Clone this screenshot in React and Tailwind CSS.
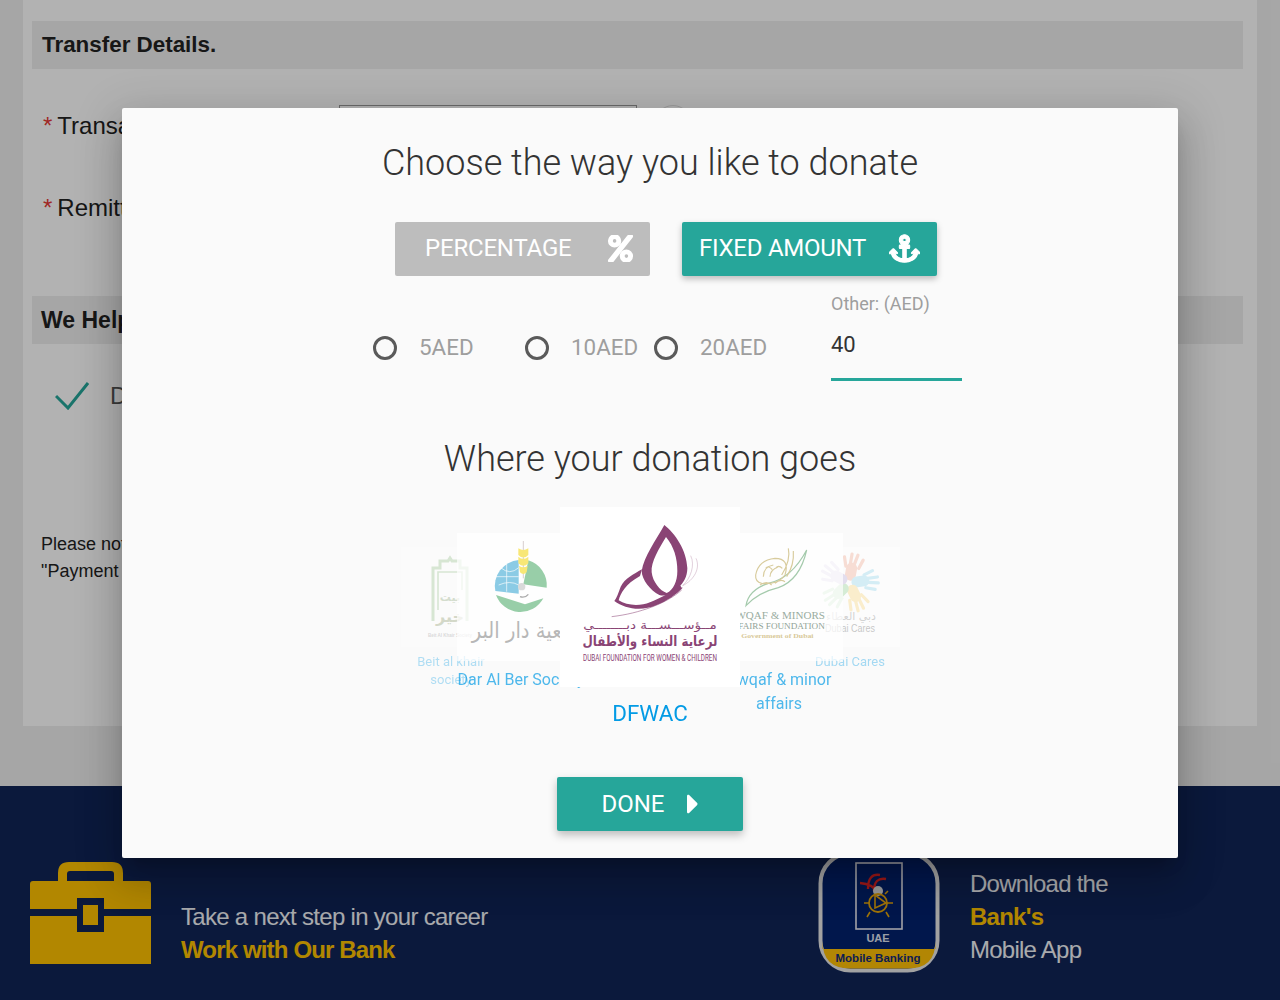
import React from "react";
import { FaPercent, FaAnchor, FaCaretRight } from "react-icons/fa";

const arabic = "'DejaVu Sans', sans-serif";

function Briefcase() {
  return (
    <svg width="121" height="102" viewBox="30 863 121 102" className="shrink-0">
      <path
        fillRule="evenodd"
        fill="#ffc200"
        d="M58 882V874Q58 863 69 863H112Q123 863 123 874V882H148Q151 882 151 885V910H104V899H77V910H30V885Q30 882 33 882ZM67 882H114V875Q114 872 111 872H70Q67 872 67 875Z"
      />
      <path fill="#ffc200" d="M30 917H77V933H104V917H151V965H30Z" />
      <rect x="83" y="906" width="15" height="20" fill="#ffc200" />
    </svg>
  );
}

function AppIcon() {
  return (
    <svg width="122" height="122" viewBox="0 0 122 122" className="shrink-0">
      <rect x="2.5" y="2.5" width="117" height="117" rx="30" fill="#02226e" stroke="#e8e8e8" strokeWidth="4" />
      <path d="M4.5 98H117.5V90Q117.5 117.5 90 117.5H32Q4.5 117.5 4.5 90Z" fill="#ffc107" />
      <rect x="38" y="12" width="46" height="66" fill="none" stroke="#e8e8ef" strokeWidth="1.6" />
      <path d="M42 32Q55 33 60 42M50 38Q50 22 62 24M56 40Q56 26 68 28" fill="none" stroke="#d22" strokeWidth="2.4" />
      <circle cx="60" cy="40" r="5" fill="#ddd" />
      <circle cx="60" cy="52" r="9" fill="none" stroke="#e5a50c" strokeWidth="1.8" />
      <path d="M57 44L68 52L57 57ZM46 52H51M69 52H75M52 61L49 66M68 61L71 66M67 43L70 40" fill="none" stroke="#e5a50c" strokeWidth="1.6" />
      <text x="60" y="91" textAnchor="middle" fontSize="11" fontWeight="700" fill="#dfe3ee" fontFamily="'Liberation Sans', sans-serif">UAE</text>
      <text x="60" y="111" textAnchor="middle" fontSize="11.5" fontWeight="700" fill="#122a78" fontFamily="'Liberation Sans', sans-serif">Mobile Banking</text>
    </svg>
  );
}

function DfwacLogo() {
  return (
    <svg width="180" height="180" viewBox="-30 -24 540 540" className="block">
      <g fill="#8a4475">
        <path
          fillRule="evenodd"
          d="M283 30C315 55 350 105 352 160C352 185 340 205 325 218C305 236 285 246 268 240C240 225 216 195 215 168C222 125 258 75 283 30ZM288 66C268 100 242 140 245 172C248 200 270 228 290 234C310 225 322 200 322 168C322 130 312 95 288 66Z"
        />
        <path
          fillRule="evenodd"
          d="M216 163C190 178 165 190 152 215C145 235 140 248 133 258C165 282 215 290 260 270C290 258 320 238 338 218L322 214C300 235 270 250 240 262C210 274 170 272 146 256C152 235 165 208 210 183Z"
        />
        <circle cx="327" cy="216" r="6" />
      </g>
      <path d="M338 212C362 190 376 150 362 122M338 212C372 195 392 160 378 130" fill="none" stroke="#b788a6" strokeWidth="1.2" />
      <path d="M125 305C210 295 290 265 335 225" fill="none" stroke="#8a4475" strokeWidth="1.6" />
      <g fontFamily={arabic} fill="#8a4475" textAnchor="middle">
        <text x="240" y="342" fontSize="34" textLength="400" lengthAdjust="spacingAndGlyphs" direction="rtl">مــؤســـســـة دبــــــــي</text>
        <text x="240" y="392" fontSize="42" fontWeight="700" textLength="405" lengthAdjust="spacingAndGlyphs" direction="rtl">لرعاية النساء والأطفال</text>
      </g>
      <text x="240" y="438" textAnchor="middle" fontSize="28" fill="#8a4475" fontFamily="'Roboto', sans-serif" textLength="402" lengthAdjust="spacingAndGlyphs">DUBAI FOUNDATION FOR WOMEN &amp; CHILDREN</text>
    </svg>
  );
}

function DarAlBerLogo() {
  return (
    <svg width="128" height="128" viewBox="-9 -6 384 384" className="block">
      <path d="M176 75A78 78 0 0 0 106 168L176 176Z" fill="#5bb7dc" />
      <path d="M205 76A78 78 0 0 1 260 158L190 148Z" fill="#6dbb84" />
      <path d="M108 180L195 208L250 190A78 78 0 0 1 108 180Z" fill="#6dbb84" />
      <path d="M140 85L140 170M108 125H176M122 98Q150 122 176 98M116 150Q150 135 176 150" fill="none" stroke="#fff" strokeWidth="2" />
      <path d="M190 18V130" stroke="#a99" strokeWidth="2" />
      <path d="M175 40Q190 50 205 40L205 60Q190 75 175 60ZM175 65Q190 78 205 65L205 85Q190 100 175 85ZM177 92Q190 102 203 92L200 112Q190 122 180 112Z" fill="#f6df3d" />
      <circle cx="185" cy="155" r="11" fill="#ccc" />
      <path d="M180 185Q195 190 205 178" fill="none" stroke="#888" strokeWidth="4" />
      <text x="205" y="310" textAnchor="middle" fontSize="66" fill="#9a9a9a" fontFamily={arabic} direction="rtl" textLength="340" lengthAdjust="spacingAndGlyphs">جمعية دار البر</text>
    </svg>
  );
}

function AwqafLogo() {
  return (
    <svg width="128" height="128" viewBox="-60 -6 384 384" className="block">
      <path d="M33 212Q40 165 100 145Q170 130 215 45Q195 135 130 158Q70 172 33 212Z" fill="none" stroke="#7fb58a" strokeWidth="3.5" />
      <path
        d="M62 120Q70 75 120 70Q165 70 150 120Q130 150 80 145Q60 140 62 120ZM85 125Q85 95 115 90M105 125Q105 105 130 95M160 40Q168 75 140 120M175 48Q178 90 155 125M75 150Q95 135 110 150M120 145Q135 130 150 140M92 100Q100 90 112 104M122 100Q130 88 142 100"
        fill="none"
        stroke="#c9b774"
        strokeWidth="3.5"
      />
      <text x="125" y="253" textAnchor="middle" fontSize="30" fill="#6f8a78" fontFamily="'Liberation Serif', serif" textLength="290" lengthAdjust="spacingAndGlyphs">AWQAF &amp; MINORS</text>
      <text x="122" y="283" textAnchor="middle" fontSize="25" fill="#5f7a6a" fontFamily="'Liberation Serif', serif" textLength="295" lengthAdjust="spacingAndGlyphs">AFFAIRS FOUNDATION</text>
      <text x="127" y="308" textAnchor="middle" fontSize="19" fontWeight="700" fill="#c9b26d" fontFamily="'Liberation Serif', serif" textLength="217" lengthAdjust="spacingAndGlyphs">Government of Dubai</text>
    </svg>
  );
}

function BeitKhairLogo() {
  return (
    <svg width="100" height="100" viewBox="401 547 100 100" className="block">
      <path d="M433 621V568H440V561H448L450 558L452 561H460V568H467V621" fill="none" stroke="#86b87a" strokeWidth="3" />
      <path d="M438 610V572H462V590" fill="none" stroke="#86b87a" strokeWidth="1.6" />
      <text x="450" y="601" textAnchor="middle" fontSize="11" fontWeight="700" fill="#7d9c68" fontFamily={arabic}>بيت</text>
      <text x="450" y="622" textAnchor="middle" fontSize="16" fontWeight="700" fill="#7a8a55" fontFamily={arabic}>خير</text>
      <text x="450" y="637" textAnchor="middle" fontSize="4.5" fontWeight="700" fill="#8a8a8a" fontFamily="'Liberation Sans', sans-serif">Beit Al Khair Society</text>
    </svg>
  );
}

function DubaiCaresLogo() {
  const hands = [
    { r: 10, c: "#f1a58c" },
    { r: 82, c: "#8ed3ea" },
    { r: 154, c: "#f8d477" },
    { r: 226, c: "#8fd08f" },
    { r: 298, c: "#b8a8d8" },
  ];
  return (
    <svg width="100" height="100" viewBox="800 547 100 100" className="block">
      {hands.map((h) => (
        <g key={h.r} transform={`rotate(${h.r} 849 583)`} stroke={h.c} fill="none" strokeLinecap="round">
          <path d="M849 575V568" strokeWidth="11" />
          <path d="M843 567L840 558M847 564V554M851 564L853 554M856 567L859 558" strokeWidth="3.2" />
        </g>
      ))}
      <text x="851" y="620" textAnchor="middle" fontSize="11" fill="#888" fontFamily={arabic}>دبي العطاء</text>
      <text x="850" y="632" textAnchor="middle" fontSize="11" fill="#666" fontFamily="'Liberation Sans', sans-serif" textLength="50" lengthAdjust="spacingAndGlyphs">Dubai Cares</text>
    </svg>
  );
}

function Radio({ label, width }) {
  return (
    <label className="flex items-center shrink-0" style={{ width }}>
      <span className="size-6 rounded-full border-[3px] border-[#5a5a5a]" />
      <span className="ml-[22px] text-[22.4px] text-[#9e9e9e]">{label}</span>
    </label>
  );
}

export default function App() {
  return (
    <div className="relative h-[1000px] overflow-hidden bg-[#eeeeee] font-['Liberation_Sans',sans-serif] text-[#222]">
      {/* page behind the dialog */}
      <div className="mx-[23px] h-[726px] bg-white pl-[9px] pr-[9px] pt-[21px]">
        <div className="mr-[5px] flex h-12 items-center bg-[#eeeeee] px-[10px] pb-px text-[22.4px] font-bold">Transfer Details.</div>
        <div className="mt-9 flex items-start">
          <div className="flex w-[307px] pl-[11px] pt-[5px] text-2xl leading-8">
            <span className="mr-[5px] text-[#e53935]">*</span>Transaction
          </div>
          <div className="h-9 w-[298px] border border-[#999]" />
          <div className="ml-[18px] size-9 rounded-full border border-[#ddd]" />
        </div>
        <div className="mt-[50px] flex pl-[11px] text-2xl leading-8">
          <span className="mr-[5px] text-[#e53935]">*</span>Remittance
        </div>
        <div className="mr-[5px] mt-[72px] flex h-12 items-center bg-[#eeeeee] px-[9px] text-[23px] font-bold">We Help</div>
        <div className="mt-9 flex items-center pl-[23px]">
          <svg width="34" height="28" viewBox="0 0 34 28">
            <path d="M1 14L13 26L33 1" fill="none" stroke="#26a69a" strokeWidth="3" />
          </svg>
          <span className="ml-[21px] text-2xl text-[#555]">Donate</span>
        </div>
        <div className="mt-[119px] pl-[9px] text-lg leading-[27px]">
          <p>Please note</p>
          <p>"Payment</p>
        </div>
      </div>
      <footer className="mt-[60px] flex h-[214px] bg-[#112557] pl-[30px] pt-[65px] text-2xl leading-[33px] text-[#f2f4f8]">
        <div className="flex w-[788px] items-start pt-[11px]">
          <Briefcase />
          <div className="ml-[30px] pt-[38px] tracking-[-0.7px]">
            <p>Take a next step in your career</p>
            <p className="font-bold tracking-[-0.85px] text-[#ffc200]">Work with Our Bank</p>
          </div>
        </div>
        <div className="flex items-start">
          <AppIcon />
          <div className="ml-[30px] pt-[16px] tracking-[-0.75px]">
            <p>Download the</p>
            <p className="font-bold text-[#ffc200]">Bank's</p>
            <p>Mobile App</p>
          </div>
        </div>
      </footer>

      <div className="absolute inset-0 bg-black/30" />

      {/* donation dialog */}
      <div className="absolute left-[122px] top-[108px] flex h-[750px] w-[1056px] flex-col items-center rounded-[2px] bg-[#fafafa] font-['Roboto',sans-serif] shadow-[0_24px_38px_3px_rgba(0,0,0,0.14),0_9px_46px_8px_rgba(0,0,0,0.12),0_11px_15px_-7px_rgba(0,0,0,0.2)]">
        <h2 className="mt-[31px] text-[36px] font-light leading-[48px] text-[#333]">Choose the way you like to donate</h2>
        <div className="ml-8 mt-[35px] flex gap-8">
          <button className="flex h-[54px] w-[255px] items-center justify-between rounded-[2px] bg-[#bdbdbd] pb-[2px] pl-[30px] pr-4 text-2xl tracking-[-0.2px] text-white">
            PERCENTAGE
            <FaPercent className="size-[27px]" stroke="currentColor" strokeWidth={28} />
          </button>
          <button className="flex h-[54px] w-[255px] items-center justify-between rounded-[2px] bg-[#26a69a] pb-[2px] pl-[17px] pr-[17px] text-2xl tracking-[-0.25px] text-white shadow-[0_3px_6px_rgba(0,0,0,0.25)]">
            FIXED AMOUNT
            <FaAnchor className="size-[31px]" stroke="currentColor" strokeWidth={20} />
          </button>
        </div>
        <div className="mt-[16px] flex w-full items-start pl-[251px]">
          <div className="mt-[39px] flex">
            <Radio label="5AED" width={152} />
            <Radio label="10AED" width={129} />
            <Radio label="20AED" width={177} />
          </div>
          <div className="w-[131px]">
            <p className="text-lg leading-6 text-[#9e9e9e]">Other: (AED)</p>
            <p className="mt-[14px] h-[48px] text-[22px] leading-[30px] text-[#333]">40</p>
            <div className="h-[3px] bg-[#26a69a]" />
          </div>
        </div>
        <h2 className="mt-[54px] text-[36px] font-light leading-[48px] text-[#333]">Where your donation goes</h2>

        {/* coverflow, the cards overlap each other */}
        <div className="relative mt-6 h-[230px] w-full">
          <div className="absolute left-[279px] top-[40px] w-[100px] text-center text-[13px] leading-[18px] text-[#039be5] opacity-30">
            <div className="h-[100px] bg-white"><BeitKhairLogo /></div>
            <p className="mt-[6px]">Beit al khair society</p>
          </div>
          <div className="absolute left-[678px] top-[40px] w-[100px] text-center text-[13px] leading-[18px] text-[#039be5] opacity-35">
            <div className="h-[100px] bg-white"><DubaiCaresLogo /></div>
            <p className="mt-[6px]">Dubai Cares</p>
          </div>
          <div className="absolute left-[335px] top-[26px] w-[128px] text-center text-base leading-6 text-[#039be5] opacity-70">
            <div className="h-[128px] bg-white"><DarAlBerLogo /></div>
            <p className="mt-[7px] whitespace-nowrap">Dar Al Ber Society</p>
          </div>
          <div className="absolute left-[593px] top-[26px] w-[128px] text-center text-base leading-6 text-[#039be5] opacity-70">
            <div className="h-[128px] bg-white"><AwqafLogo /></div>
            <p className="mt-[7px]">Awqaf &amp; minor affairs</p>
          </div>
          <div className="absolute left-[438px] top-0 w-[180px] text-center text-[22.4px] leading-[30px] text-[#039be5]">
            <div className="h-[180px] bg-white"><DfwacLogo /></div>
            <p className="mt-[11px]">DFWAC</p>
          </div>
        </div>

        <button className="mt-[40px] flex h-[54px] w-[186px] items-center justify-center rounded-[2px] bg-[#26a69a] pl-[10px] text-2xl text-white shadow-[0_4px_8px_rgba(0,0,0,0.25)]">
          DONE
          <FaCaretRight className="ml-[12px] size-[32px]" />
        </button>
      </div>
    </div>
  );
}
